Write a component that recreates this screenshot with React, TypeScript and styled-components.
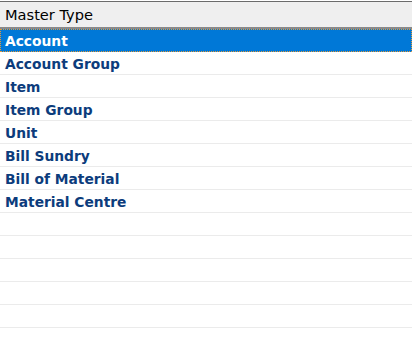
import React, { useState } from "react";
import styled, { createGlobalStyle } from "styled-components";

const GlobalStyle = createGlobalStyle`
  html, body {
    margin: 0;
    padding: 0;
    background: #ffffff;
  }
`;

const masterTypes = [
  "Account",
  "Account Group",
  "Item",
  "Item Group",
  "Unit",
  "Bill Sundry",
  "Bill of Material",
  "Material Centre",
];

const EMPTY_ROWS = 6;

const App: React.FC = () => {
  const [selected, setSelected] = useState(0);

  return (
    <>
      <GlobalStyle />
      <Grid>
        <Header>Master Type</Header>
        <List>
          {masterTypes.map((item, idx) => (
            <Row
              key={item}
              $selected={idx === selected}
              onClick={() => setSelected(idx)}
            >
              {item}
            </Row>
          ))}
          {Array.from({ length: EMPTY_ROWS }).map((_, idx) => (
            <Row key={"empty" + idx} />
          ))}
        </List>
      </Grid>
    </>
  );
};
export default App;

const Grid = styled.div`
  width: 412px;
  height: 350px;
  overflow: hidden;
  padding-top: 1px;
  box-sizing: border-box;
  background: #ffffff;
`;

const Header = styled.div`
  height: 25px;
  line-height: 26px;
  padding-left: 5px;
  background-color: #efefef;
  border-top: 1px solid #6b6b6b;
  border-bottom: 2px solid #8a8a8a;
  font-family: "DejaVu Sans", Verdana, sans-serif;
  font-size: 14.6px;
  color: #000000;
`;

const List = styled.ul`
  margin: 0;
  padding: 0;
  list-style: none;
`;

const Row = styled.li<{ $selected?: boolean }>`
  height: 22px;
  line-height: 24px;
  padding-left: 5px;
  font-family: "DejaVu Sans", Verdana, sans-serif;
  font-weight: bold;
  font-size: 13.8px;
  cursor: default;
  color: ${(p) => (p.$selected ? "#ffffff" : "#0c3c7c")};
  background-color: ${(p) => (p.$selected ? "#0078d7" : "#ffffff")};
  border-bottom: 1px solid ${(p) => (p.$selected ? "#0078d7" : "#ebebeb")};
  outline: ${(p) => (p.$selected ? "1px dotted #e39a3a" : "none")};
  outline-offset: -1px;
`;
